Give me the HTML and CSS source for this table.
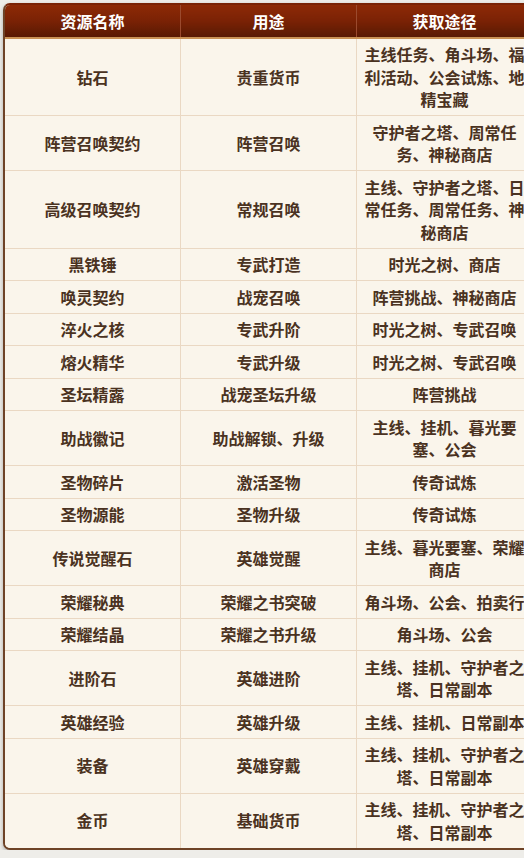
FILE: index.html
```html
<!DOCTYPE html>
<html lang="zh-CN">
<head>
<meta charset="utf-8">
<title>资源表</title>
<link rel="stylesheet" href="styles.css">
</head>
<body>
<div class="wrap">
<table class="res">
<thead>
<tr><th>资源名称</th><th>用途</th><th>获取途径</th></tr>
</thead>
<tbody>
<tr><td>钻石</td><td>贵重货币</td><td>主线任务、角斗场、福利活动、公会试炼、地精宝藏</td></tr>
<tr><td>阵营召唤契约</td><td>阵营召唤</td><td>守护者之塔、周常任务、神秘商店</td></tr>
<tr><td>高级召唤契约</td><td>常规召唤</td><td>主线、守护者之塔、日常任务、周常任务、神秘商店</td></tr>
<tr><td>黑铁锤</td><td>专武打造</td><td>时光之树、商店</td></tr>
<tr><td>唤灵契约</td><td>战宠召唤</td><td>阵营挑战、神秘商店</td></tr>
<tr><td>淬火之核</td><td>专武升阶</td><td>时光之树、专武召唤</td></tr>
<tr><td>熔火精华</td><td>专武升级</td><td>时光之树、专武召唤</td></tr>
<tr><td>圣坛精露</td><td>战宠圣坛升级</td><td>阵营挑战</td></tr>
<tr><td>助战徽记</td><td>助战解锁、升级</td><td>主线、挂机、暮光要塞、公会</td></tr>
<tr><td>圣物碎片</td><td>激活圣物</td><td>传奇试炼</td></tr>
<tr><td>圣物源能</td><td>圣物升级</td><td>传奇试炼</td></tr>
<tr><td>传说觉醒石</td><td>英雄觉醒</td><td>主线、暮光要塞、荣耀商店</td></tr>
<tr><td>荣耀秘典</td><td>荣耀之书突破</td><td>角斗场、公会、拍卖行</td></tr>
<tr><td>荣耀结晶</td><td>荣耀之书升级</td><td>角斗场、公会</td></tr>
<tr><td>进阶石</td><td>英雄进阶</td><td>主线、挂机、守护者之塔、日常副本</td></tr>
<tr><td>英雄经验</td><td>英雄升级</td><td>主线、挂机、日常副本</td></tr>
<tr><td>装备</td><td>英雄穿戴</td><td>主线、挂机、守护者之塔、日常副本</td></tr>
<tr><td>金币</td><td>基础货币</td><td>主线、挂机、守护者之塔、日常副本</td></tr>
</tbody>
</table>
</div>
</body>
</html>
```
FILE: styles.css
```css
html, body {
  margin: 0;
  padding: 0;
  overflow: hidden;
  background: #eeede9;
}
body {
  padding: 3px 0 0 3px;
  font-family: "Noto Sans CJK SC", "Noto Sans", sans-serif;
}
.wrap {
  width: 527px;
  border: 2px solid #6e4327;
  border-top-color: #7a2306;
  border-radius: 7px;
  overflow: hidden;
  box-shadow: 0 2px 4px rgba(0, 0, 0, 0.28);
  background: #faf5eb;
}
.res {
  width: 100%;
  border-collapse: collapse;
  table-layout: fixed;
  font-size: 16px;
  line-height: 22.5px;
  font-weight: 700;
}
.res th {
  color: #fff;
  background: linear-gradient(to bottom, #8d2a06 0%, #7a2205 50%, #581903 100%);
  padding: 5px 6px 4px;
  border-bottom: 2px solid #c99155;
  border-left: 1px solid #9b4a2e;
  text-align: center;
}
.res th:first-child { border-left: none; }
.res td {
  color: #4a3221;
  background: #faf5eb;
  padding: 4.5px 6px;
  border-bottom: 1px solid #ead8c3;
  border-left: 1px solid #ead8c3;
  text-align: center;
  vertical-align: middle;
}
.res td:first-child { border-left: none; }
.res tbody tr:last-child td { border-bottom: none; }
```
